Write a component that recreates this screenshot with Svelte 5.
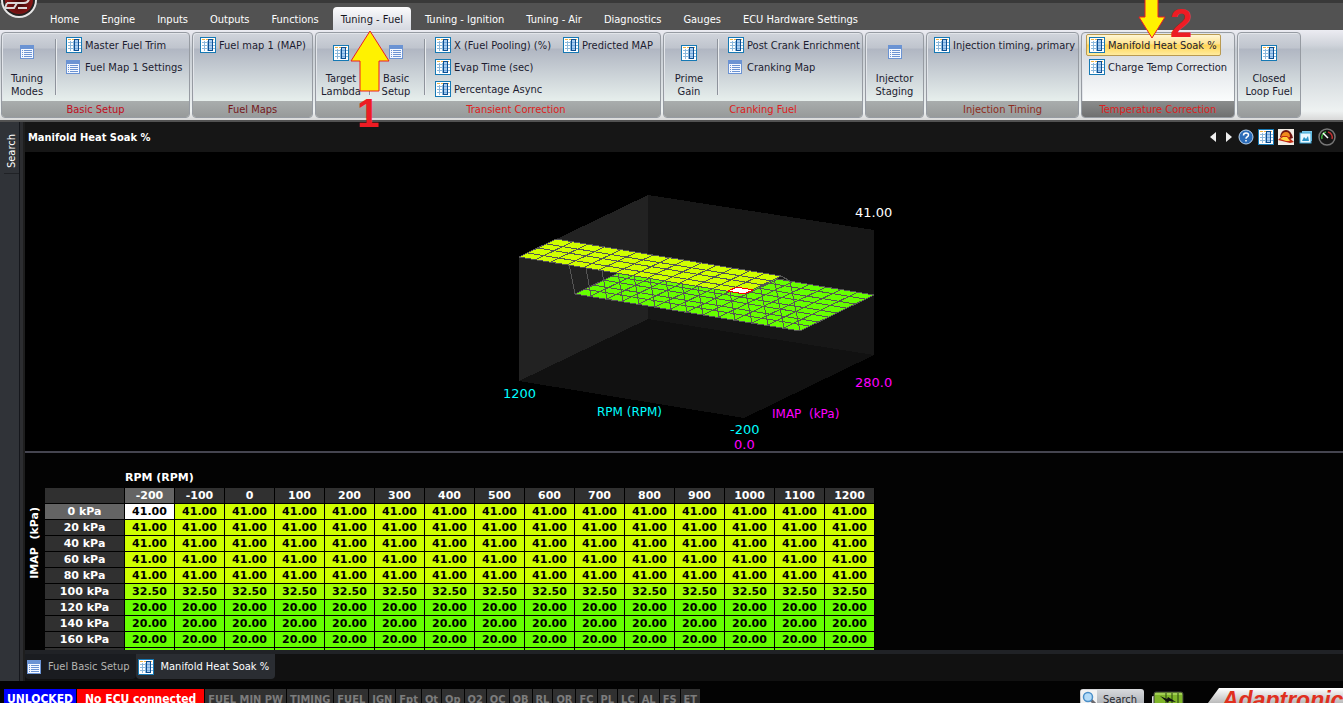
<script>
  let activeTab = $state('Tuning - Fuel');
  let activeItem = $state('Manifold Heat Soak %');

  const tabs = [
    'Home', 'Engine', 'Inputs', 'Outputs', 'Functions', 'Tuning - Fuel',
    'Tuning - Ignition', 'Tuning - Air', 'Diagnostics', 'Gauges', 'ECU Hardware Settings'
  ];

  const groups = [
    {
      title: 'Basic Setup', tone: 'crimson',
      big: [{ icon: 'list', label: 'Tuning Modes' }],
      columns: [[{ icon: 'table', label: 'Master Fuel Trim' }, { icon: 'list', label: 'Fuel Map 1 Settings' }]]
    },
    {
      title: 'Fuel Maps', tone: 'maroon', big: [],
      columns: [[{ icon: 'table', label: 'Fuel map 1 (MAP)' }]]
    },
    {
      title: 'Transient Correction', tone: 'red', wide: true,
      big: [{ icon: 'table', label: 'Target Lambda' }, { icon: 'list', label: 'Basic Setup' }],
      columns: [
        [
          { icon: 'table', label: 'X (Fuel Pooling) (%)' },
          { icon: 'table', label: 'Evap Time (sec)' },
          { icon: 'table', label: 'Percentage Async' }
        ],
        [{ icon: 'table', label: 'Predicted MAP' }]
      ]
    },
    {
      title: 'Cranking Fuel', tone: 'red',
      big: [{ icon: 'table', label: 'Prime Gain' }],
      columns: [[{ icon: 'table', label: 'Post Crank Enrichment' }, { icon: 'list', label: 'Cranking Map' }]]
    },
    { title: '', tone: 'red', big: [{ icon: 'list', label: 'Injector Staging' }], columns: [] },
    {
      title: 'Injection Timing', tone: 'brown', big: [],
      columns: [[{ icon: 'table', label: 'Injection timing, primary' }]]
    },
    {
      title: 'Temperature Correction', tone: 'red', hot: true, big: [],
      columns: [[{ icon: 'table', label: 'Manifold Heat Soak %' }, { icon: 'table', label: 'Charge Temp Correction' }]]
    },
    { title: '', tone: 'red', big: [{ icon: 'table', label: 'Closed Loop Fuel' }], columns: [] }
  ];

  const flags = [
    'FUEL MIN PW', 'TIMING', 'FUEL', 'IGN', 'Fpt', 'Ot', 'Op', 'O2', 'OC', 'OB',
    'RL', 'OR', 'FC', 'PL', 'LC', 'AL', 'FS', 'ET'
  ];

  // table data
  const rpm = Array.from({ length: 15 }, (_, i) => -200 + i * 100);
  const rows = [41, 41, 41, 41, 41, 32.5, 20, 20, 20, 20].map((value, i) => ({ kpa: i * 20, value }));

  function shade(value) {
    if (value > 40) return 'high';
    return value > 30 ? 'mid' : 'low';
  }

  // surface plot: RPM runs front to left, IMAP runs front to right
  const heights = [41, 41, 41, 41, 41, 38, 20, 20, 20, 20, 20, 20, 20, 20, 20];

  function point(r, m) {
    const x = 744 - (225 * r) / 14 + (130 * m) / 14;
    const y = 418 - (37 * r) / 14 - (63 * m) / 14 - (heights[m] * 124) / 41;
    return [Math.round(x), Math.round(y)];
  }

  function line(points) {
    return 'M' + points.map((p) => p.join(' ')).join('L');
  }

  function sheet(from, to) {
    let d = '';
    for (let m = from; m <= to; m++) d += line([point(0, m), point(14, m)]);
    for (let r = 0; r <= 14; r++) d += line([point(r, from), point(r, to)]);
    return {
      mesh: d,
      fill: line([point(0, from), point(14, from), point(14, to), point(0, to)]) + 'Z'
    };
  }

  const upper = sheet(0, 4);
  const lower = sheet(6, 14);
  let drop = line([point(0, 5), point(14, 5)]);
  for (let r = 0; r <= 14; r++) drop += line([point(r, 4), point(r, 5), point(r, 6)]);
  const cursor = line([point(0, 0), point(1, 0), point(1, 1), point(0, 1)]) + 'Z';
</script>

{#snippet icon(name)}
  {#if name === 'table'}
    <svg class="icon" viewBox="0 0 16 16" aria-hidden="true" shape-rendering="crispEdges">
      <rect width="16" height="16" fill="#1679b4" />
      <rect x="1" y="1" width="14" height="14" fill="#fff" />
      <path d="M2 2h3v1H2zM6 2h2v1H6zM13 2h1v1h-1z" fill="#f0b548" />
      <path d="M2 5h6v1H2zM2 8h6v1H2zM2 11h6v1H2zM4 4h1v10H4zM7 4h1v10H7zM13 5h2v1h-2zM13 8h2v1h-2zM13 11h2v1h-2z" fill="#8db9dc" />
      <rect x="8" y="2" width="5" height="12" fill="#0d4f93" />
      <rect x="9" y="3" width="3" height="10" fill="#a9cdf0" />
      <path d="M9 5h3v1H9zM9 8h3v1H9zM9 11h3v1H9z" fill="#74a9dc" />
    </svg>
  {:else}
    <svg class="icon list" viewBox="0 0 14 14" aria-hidden="true" shape-rendering="crispEdges">
      <rect width="14" height="14" fill="#6b93d3" />
      <rect x="1" y="4" width="12" height="9" fill="#f4f8ff" />
      <path d="M2 5h1v1H2zM2 7h1v1H2zM2 9h1v1H2zM2 11h1v1H2zM4 5h8v1H4zM4 7h8v1H4zM4 9h8v1H4zM4 11h8v1H4z" fill="#6b93d3" />
    </svg>
  {/if}
{/snippet}

<div class="app">
  <header>
    <svg class="orb" viewBox="0 0 38 20" aria-hidden="true">
      <defs>
        <radialGradient id="orb" cx=".5" cy=".6" r=".6">
          <stop offset="0" stop-color="#3a0808" />
          <stop offset="1" stop-color="#a01a1a" />
        </radialGradient>
      </defs>
      <circle cx="19" cy="0" r="18" fill="#e6e6e6" />
      <circle cx="19" cy="0" r="16" fill="#252020" />
      <circle cx="19" cy="0" r="14" fill="url(#orb)" />
      <path d="M7 3L12 3H24Q28 3 29-1M7 3L5 8H14L17 3M18 8H27" stroke="#dcd8d8" stroke-width="2" fill="none" />
    </svg>
    <nav>
      {#each tabs as tab}
        <button class:active={tab === activeTab} onclick={() => (activeTab = tab)}>{tab}</button>
      {/each}
    </nav>
    <div class="ribbon">
      {#each groups as group}
        <section class="group" class:hot={group.hot} class:wide={group.wide}>
          <div class="tools">
            {#each group.big as item, i}
              {#if i > 0}<i class="divider"></i>{/if}
              <button class="big">
                <span class="art">{@render icon(item.icon)}</span>
                <span>{item.label}</span>
              </button>
            {/each}
            {#if group.big.length && group.columns.length}<i class="divider"></i>{/if}
            {#each group.columns as column}
              <div class="column">
                {#each column as item}
                  <button class="small" class:selected={item.label === activeItem} onclick={() => (activeItem = item.label)}>
                    <span class="art">{@render icon(item.icon)}</span>{item.label}
                  </button>
                {/each}
              </div>
            {/each}
          </div>
          <h2 class={group.tone}>{group.title}</h2>
        </section>
      {/each}
    </div>
  </header>

  <main>
    <aside><button>Search</button></aside>
    <div class="workspace">
      <div class="titlebar">
        <h1>Manifold Heat Soak %</h1>
        <div class="actions">
          <div class="steps">
            <button aria-label="Previous">
              <svg width="8" height="10"><path d="M7 0v10L1 5z" fill="#eee" /></svg>
            </button>
            <button aria-label="Next">
              <svg width="8" height="10"><path d="M1 0v10l6-5z" fill="#eee" /></svg>
            </button>
          </div>
          <button aria-label="Help">
            <svg width="16" height="16" viewBox="0 0 16 16">
              <circle cx="8" cy="8" r="7" fill="#2c6cb8" stroke="#b9d4f0" />
              <path d="M5.500 6.500Q5.500 4 8 4t2.500 2q0 1.200-1.500 2-1 .5-1 1.700M8 11v1.600" stroke="#fff" stroke-width="1.500" fill="none" />
            </svg>
          </button>
          <button aria-label="Table view">{@render icon('table')}</button>
          <button aria-label="Surface view">
            <svg width="16" height="16" viewBox="0 0 16 16">
              <rect width="16" height="16" fill="#f2ece4" />
              <path d="M2 8Q3 1 8 1t7 8l-3 1z" fill="#6e1410" />
              <path d="M3 8q1-5 5-5t4 5l-4 2z" fill="#f08a1c" />
              <path d="M0 11l4-4h5l7 6-4 1z" fill="#c22a14" />
              <path d="M2 10l3-2h4l3 4H8z" fill="#ffd23c" />
            </svg>
          </button>
          <button aria-label="Picture">
            <svg width="16" height="16" viewBox="0 0 16 16">
              <rect x="4" y="2" width="10" height="10" fill="#7cc8ea" />
              <rect x="2" y="4" width="11" height="10" fill="#eaf8ff" stroke="#3ba4d4" />
              <path d="M4 12l2-4 2 2 2-3 1 5z" fill="#2a93c6" />
            </svg>
          </button>
          <button aria-label="Gauge">
            <svg width="18" height="18" viewBox="0 0 18 18">
              <circle cx="9" cy="9" r="8" fill="#161616" stroke="#777" stroke-width="1.500" />
              <path d="M4 11a5.500 5.500 0 0 1 4-7" stroke="#3fae3f" stroke-width="1.500" fill="none" />
              <path d="M10 4a5.500 5.500 0 0 1 4 7" stroke="#c03030" stroke-width="1.500" fill="none" />
              <path d="M5 5l5 5" stroke="#fff" stroke-width="1.500" />
            </svg>
          </button>
        </div>
      </div>

      <svg class="chart" viewBox="25 152 1318 299" role="img" aria-label="Manifold heat soak surface">
        <g shape-rendering="crispEdges">
          <path d="M519 381L648 319L874 355L744 418Z" fill="#111" />
          <path d="M648 195L519 257V381L648 319Z" fill="#222" />
          <path d="M648 195L874 230V355L648 319Z" fill="#171717" />
          <path d={lower.fill} fill="#6f0" />
          <path d={lower.mesh} class="mesh" />
          <path d={drop} class="mesh" />
          <path d={upper.fill} fill="#d0ff00" />
          <path d={upper.mesh} class="mesh" />
          <path d={cursor} fill="#fff" stroke="#f00" />
        </g>
        <text x="855" y="217" fill="#fff">41.00</text>
        <text x="503" y="398" fill="#0ff">1200</text>
        <text x="730" y="434" fill="#0ff">-200</text>
        <text x="734" y="449" fill="#f0f">0.0</text>
        <text x="855" y="387" fill="#f0f">280.0</text>
        <text x="597" y="416" class="axis" fill="#0ff">RPM (RPM)</text>
        <text x="772" y="418" class="axis" fill="#f0f">IMAP&nbsp; (kPa)</text>
      </svg>

      <div class="grid">
        <span class="y-label">IMAP&nbsp; (kPa)</span>
        <table>
          <caption>RPM (RPM)</caption>
          <thead>
            <tr>
              <th class="corner"></th>
              {#each rpm as r, i}
                <th class:current={i === 0}>{r}</th>
              {/each}
            </tr>
          </thead>
          <tbody>
            {#each rows as row, y}
              <tr>
                <th class:current={y === 0}>{row.kpa} kPa</th>
                {#each rpm as r, x}
                  <td class={shade(row.value)} class:cursor={x === 0 && y === 0}>{row.value.toFixed(2)}</td>
                {/each}
              </tr>
            {/each}
          </tbody>
        </table>
      </div>

      <div class="documents">
        <button>{@render icon('list')}Fuel Basic Setup</button>
        <button class="active">{@render icon('table')}Manifold Heat Soak %</button>
      </div>
    </div>
  </main>

  <footer>
    <span class="flag locked">UNLOCKED</span>
    <span class="flag offline">No ECU connected</span>
    {#each flags as flag}
      <span class="flag">{flag}</span>
    {/each}
    <button class="search">
      <svg width="18" height="18" viewBox="0 0 18 18" aria-hidden="true">
        <rect width="16" height="18" fill="#f2f2f2" />
        <path d="M10 10l5 5" stroke="#6a6a70" stroke-width="3" />
        <circle cx="7" cy="7" r="4.500" fill="#b5dcf8" stroke="#4b8fc8" stroke-width="1.500" />
      </svg>
      Search
    </button>
    <svg class="battery" width="32" height="20" viewBox="0 0 32 20" aria-hidden="true">
      <rect x="0" y="5" width="4" height="12" rx="1" fill="#ddd" />
      <rect x="2" y="1" width="29" height="22" rx="2" fill="#7fb52a" stroke="#3d3d3d" />
      <path d="M3 3h27" stroke="#c5e87d" />
      <path d="M14 2v18M20 2v18M26 2v18" stroke="#24400c" />
      <path d="M8 5l7 3 1-2 8 5-7-1-1 2z" fill="#111" />
    </svg>
    <svg class="brand" width="138" height="20" viewBox="0 0 138 20">
      <defs>
        <linearGradient id="plate" x2="0" y2="1">
          <stop offset="0" stop-color="#fff" />
          <stop offset="1" stop-color="#a8a8a8" />
        </linearGradient>
      </defs>
      <path d="M14 1h124v19H0z" fill="url(#plate)" />
      <text x="17" y="21">Adaptronic</text>
    </svg>
  </footer>

  <!-- step markers -->
  <svg class="marker first" width="40" height="100" viewBox="0 0 40 100">
    <path d="M20 1L39 31H29V61H10V31H1Z" />
    <text x="7" y="97">1</text>
  </svg>
  <svg class="marker second" width="60" height="40" viewBox="0 0 60 40">
    <path d="M7-2V17H1L14 38L27 17H20V-2" />
    <text x="32" y="37">2</text>
  </svg>
</div>

<style>
  :global(body) {
    background: #030303;
  }

  .app {
    position: relative;
    display: flex;
    flex-direction: column;
    height: 100vh;
    overflow: hidden;
    font: 11px/13px "DejaVu Sans Condensed", Tahoma, sans-serif;
    color: #fff;
  }

  button {
    font: inherit;
    color: inherit;
    background: none;
    border: 0;
    padding: 0;
    margin: 0;
  }

  h1,
  h2 {
    margin: 0;
    font-size: 11px;
  }

  .icon {
    display: block;
    flex: none;
    width: 16px;
    height: 16px;
  }

  .icon.list {
    width: 14px;
    height: 14px;
  }

  /* ribbon */
  header {
    flex: none;
    background: #525252;
    border-top: 3px solid #393939;
  }

  .orb {
    position: absolute;
    top: 0;
    left: 0;
    width: 38px;
    height: 20px;
  }

  nav {
    display: flex;
    gap: 6px;
    padding: 4px 0 0 42px;
  }

  nav button {
    height: 23px;
    padding: 1px 8px 0;
    white-space: nowrap;
  }

  nav button.active {
    color: #16161e;
    background: linear-gradient(#fbfbfc, #d5d8e0);
    border-radius: 4px 4px 0 0;
  }

  .ribbon {
    display: grid;
    grid-template-columns: 189px 121px 346px 200px 59px 153px 154px 64px;
    gap: 2px;
    padding: 2px 1px;
    background: linear-gradient(#ececf2, #cfd3da 17%, #c3c9d0 22%, #eef2f2 90%, #d8d8d8);
    border-bottom: 2px solid #525252;
  }

  .group {
    display: flex;
    flex-direction: column;
    height: 84px;
    overflow: hidden;
    color: #1c1c30;
    border: 1px solid #969ba2;
    border-radius: 4px;
    box-shadow: inset 1px 1px #e2e5ea;
    background: linear-gradient(#d1d5dc, #bfc4cd 18%, #b0b6c2 19%, #e6eeec 80%);
  }

  .group.hot {
    background: linear-gradient(#e6e8ec, #dcdfe4 18%, #d6dae0 19%, #fafcfc 80%);
  }

  .tools {
    flex: 1;
    display: flex;
    align-items: flex-start;
  }

  .big {
    display: flex;
    flex: 0 0 50px;
    flex-direction: column;
    align-items: center;
    height: 68px;
    padding-top: 12px;
  }

  .big:only-child {
    flex: 1;
    padding: 12px 6px 0;
  }

  .big .art {
    align-items: flex-start;
    height: 27px;
  }

  .art {
    display: flex;
    align-items: center;
  }

  .divider {
    flex: none;
    width: 1px;
    height: 56px;
    margin: 6px 0 0 3px;
    background: #8e939c;
    border-right: 1px solid #e9ecee;
  }

  .column {
    display: flex;
    flex-direction: column;
    align-items: flex-start;
    padding: 1px 1px 0 4px;
  }

  .divider + .column {
    padding-left: 6px;
  }

  .small {
    display: flex;
    align-items: center;
    gap: 3px;
    height: 22px;
    padding: 0 3px 0 2px;
    border: 1px solid transparent;
    border-radius: 2px;
    white-space: nowrap;
  }

  .small .art {
    width: 16px;
  }

  .small.selected {
    border-color: #b99a51;
    background: linear-gradient(#fff6d6, #ffe38c 45%, #ffd454 50%, #ffec9e);
  }

  h2 {
    flex: none;
    height: 16px;
    line-height: 17px;
    text-align: center;
    font-weight: normal;
    background: linear-gradient(#a9adad, #979a9a);
  }

  .hot h2 {
    background: linear-gradient(#8b8d8d, #6f7070);
  }

  .wide h2 {
    padding-left: 56px;
  }

  .crimson { color: #c00c20; }
  .maroon { color: #74181c; }
  .red { color: #dc2020; }
  .brown { color: #8e2c1c; }

  /* workspace */
  main {
    flex: 1;
    min-height: 0;
    display: flex;
  }

  aside {
    flex: none;
    width: 19px;
    padding-top: 8px;
    background: #303338;
    border-right: 1px solid #15171c;
  }

  aside button {
    writing-mode: vertical-rl;
    transform: rotate(180deg);
    width: 15px;
    height: 44px;
    margin-left: 4px;
    border-top: 1px solid #202226;
    text-align: center;
  }

  .workspace {
    flex: 1;
    min-width: 0;
    display: flex;
    flex-direction: column;
    background: #030303;
    border-left: 3px solid #2c2d30;
    box-shadow: inset 2px 0 #1e1e1e;
    padding-left: 2px;
  }

  .titlebar {
    flex: none;
    display: flex;
    align-items: center;
    justify-content: space-between;
    height: 30px;
    padding: 0 7px 0 3px;
    background: #161616;
  }

  .actions {
    display: flex;
    align-items: center;
    gap: 4px;
  }

  .actions button {
    display: flex;
  }

  .steps {
    display: flex;
    gap: 8px;
    margin-right: 1px;
  }

  .chart {
    display: block;
    flex: none;
    width: 100%;
    height: 299px;
    background: #000;
    border-bottom: 2px solid #454550;
    font-family: "DejaVu Sans", Verdana, sans-serif;
    font-size: 13px;
  }

  .axis {
    font-size: 12px;
  }

  .mesh {
    fill: none;
    stroke: #555;
  }

  .grid {
    flex: 1;
    min-height: 0;
    display: flex;
    align-items: flex-start;
    padding-top: 16px;
    overflow: hidden;
    font: bold 11px/15px "DejaVu Sans", Verdana, sans-serif;
  }

  .y-label {
    writing-mode: vertical-rl;
    transform: rotate(180deg);
    width: 20px;
    margin-top: 38px;
    line-height: 20px;
  }

  table {
    table-layout: fixed;
    width: 830px;
    border-collapse: collapse;
  }

  caption {
    height: 19px;
    line-height: 17px;
    padding-left: 80px;
    text-align: left;
  }

  th,
  td {
    height: 15px;
    padding: 0;
    border: solid #000;
    border-width: 0 1px 1px 0;
    font: inherit;
    text-align: center;
  }

  th {
    background: #303030;
  }

  .corner {
    width: 79px;
  }

  th.current {
    background: #646464;
  }

  td { color: #000; }
  td.high { background: #d0ff00; }
  td.mid { background: #a2ff00; }
  td.low { background: #6f0; }
  td.cursor { background: #fff; }

  .documents {
    flex: none;
    display: flex;
    height: 27px;
    background: #111;
    border-top: 4px solid #202226;
  }

  .documents button {
    display: flex;
    align-items: center;
    gap: 7px;
    height: 25px;
    padding: 0 6px 0 2px;
    color: #b4b4b0;
    background: #1a1c20;
    border-radius: 0 0 4px 4px;
  }

  .documents .active {
    color: #fff;
    background: #2a2d32;
  }

  /* status bar */
  footer {
    flex: none;
    display: flex;
    align-items: flex-start;
    gap: 1px;
    height: 14px;
    padding: 8px 0 0 4px;
    overflow: hidden;
    background: #030303;
  }

  .flag {
    height: 20px;
    padding: 0 3px;
    font-weight: bold;
    line-height: 21px;
    white-space: nowrap;
    color: #7c7c7c;
    background: #303030;
  }

  .locked,
  .offline {
    font-size: 12px;
    color: #fff;
  }

  .locked {
    background: #00f;
  }

  .offline {
    padding: 0 8px;
    background: #f00;
  }

  .search {
    display: flex;
    align-items: center;
    gap: 4px;
    height: 20px;
    margin-left: auto;
    padding: 0 7px 0 1px;
    color: #26262c;
    background: linear-gradient(#d8dadd, #a2a6ac);
    border-radius: 3px;
  }

  .battery {
    flex: none;
    margin: 2px 20px 0 7px;
  }

  .brand {
    flex: none;
    margin-top: -2px;
  }

  .brand text {
    font: italic bold 23px "Liberation Sans", Arial, sans-serif;
    fill: #e0301e;
  }

  .marker {
    position: absolute;
    pointer-events: none;
  }

  .marker path {
    fill: #fff200;
    stroke: #ed1c24;
  }

  .marker text {
    font: bold 40px "Liberation Sans", Arial, sans-serif;
    fill: #ed1c24;
  }

  .first {
    top: 30px;
    left: 350px;
  }

  .second {
    top: 0;
    left: 1138px;
  }
</style>
